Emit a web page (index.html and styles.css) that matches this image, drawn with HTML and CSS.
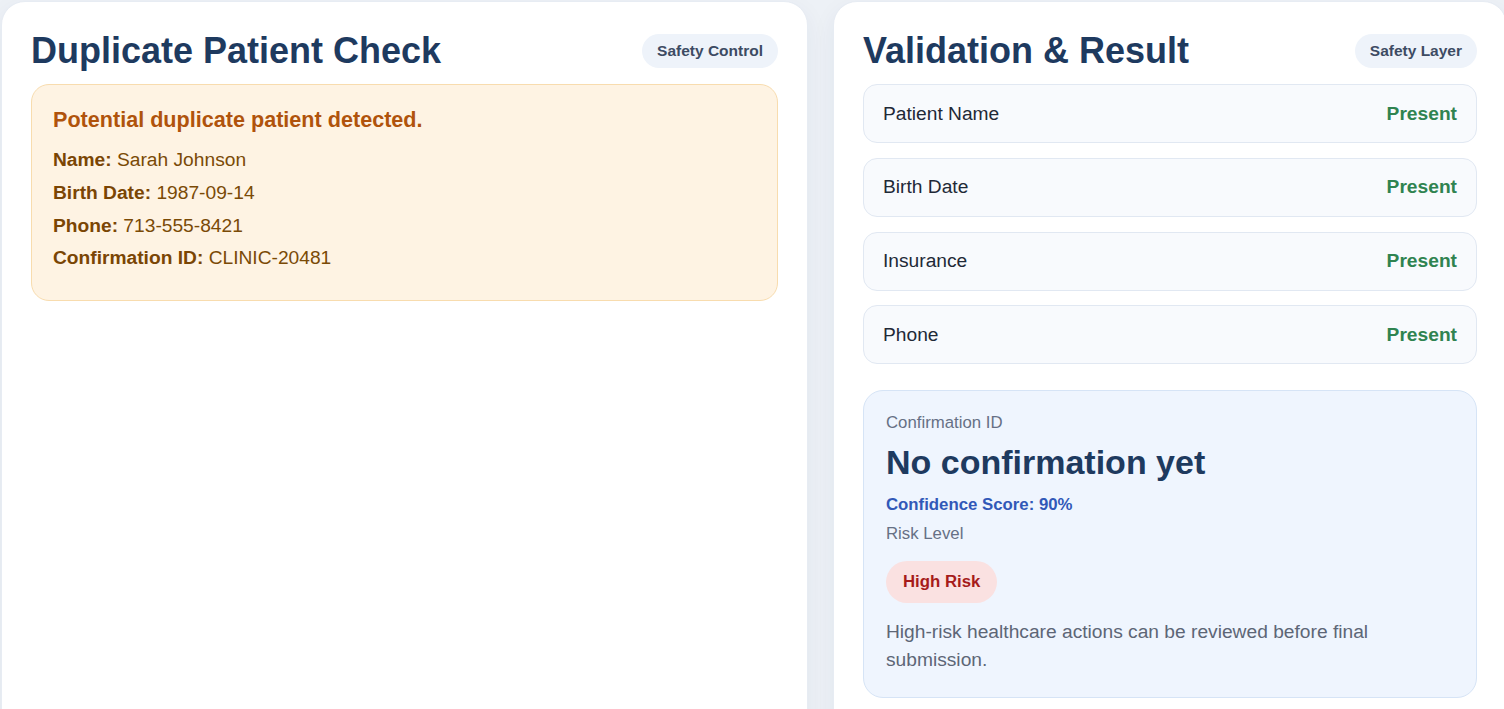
FILE: index.html
```html
<!DOCTYPE html>
<html lang="en">
<head>
<meta charset="utf-8">
<title>Duplicate Patient Check</title>
<link rel="stylesheet" href="styles.css">
</head>
<body>
<main class="layout">
  <section class="card">
    <header class="card-head">
      <h2 class="card-title">Duplicate Patient Check</h2>
      <span class="tag">Safety Control</span>
    </header>
    <div class="alert">
      <h3 class="alert-title">Potential duplicate patient detected.</h3>
      <p class="alert-line"><strong>Name:</strong> Sarah Johnson</p>
      <p class="alert-line"><strong>Birth Date:</strong> 1987-09-14</p>
      <p class="alert-line"><strong>Phone:</strong> 713-555-8421</p>
      <p class="alert-line"><strong>Confirmation ID:</strong> CLINIC-20481</p>
    </div>
  </section>

  <section class="card">
    <header class="card-head">
      <h2 class="card-title">Validation &amp; Result</h2>
      <span class="tag">Safety Layer</span>
    </header>
    <ul class="checks">
      <li class="check"><span class="check-label">Patient Name</span><span class="check-state">Present</span></li>
      <li class="check"><span class="check-label">Birth Date</span><span class="check-state">Present</span></li>
      <li class="check"><span class="check-label">Insurance</span><span class="check-state">Present</span></li>
      <li class="check"><span class="check-label">Phone</span><span class="check-state">Present</span></li>
    </ul>
    <div class="result">
      <div class="result-label">Confirmation ID</div>
      <div class="result-value">No confirmation yet</div>
      <div class="result-score">Confidence Score: 90%</div>
      <div class="result-label risk-label">Risk Level</div>
      <span class="risk-pill">High Risk</span>
      <p class="result-note">High-risk healthcare actions can be reviewed before final submission.</p>
    </div>
  </section>
</main>
</body>
</html>
```

FILE: styles.css
```css
* {
  box-sizing: border-box;
}

html, body {
  margin: 0;
  padding: 0;
}

body {
  background: #edf1f6;
  font-family: "Liberation Sans", Arial, sans-serif;
  color: #1f2937;
  overflow: hidden;
}

.layout {
  display: grid;
  grid-template-columns: 807px 674px;
  gap: 25px;
  padding: 1px 0 0 1px;
  width: 1510px;
}

.card {
  background: #ffffff;
  border: 1px solid #e7ecf3;
  border-radius: 24px;
  padding: 28px 29px 30px;
  box-shadow: 0 8px 24px rgba(30, 58, 95, 0.06);
  min-height: 760px;
}

.card-head {
  display: flex;
  align-items: center;
  justify-content: space-between;
  margin-bottom: 13px;
}

.card-title {
  margin: 0;
  font-size: 36px;
  font-weight: 700;
  line-height: 1.15;
  color: #1e3a5f;
}

.tag {
  background: #eef3fa;
  color: #3d4b63;
  font-size: 15.5px;
  font-weight: 700;
  padding: 8px 15px;
  border-radius: 999px;
  line-height: 1.15;
}

.alert {
  background: #fef3e3;
  border: 1px solid #f8dcae;
  border-radius: 18px;
  padding: 23px 21px 25px;
  color: #7a4a06;
}

.alert-title {
  margin: 0 0 11px;
  font-size: 21.6px;
  font-weight: 700;
  line-height: 1.15;
  color: #b0530c;
}

.alert-line {
  margin: 0;
  font-size: 19.2px;
  line-height: 1.7;
}

.alert-line strong {
  color: #7a4504;
}

.checks {
  list-style: none;
  margin: 0;
  padding: 0;
  display: flex;
  flex-direction: column;
  gap: 14.5px;
}

.check {
  display: flex;
  justify-content: space-between;
  align-items: center;
  background: #f8fafd;
  border: 1px solid #e1e8f2;
  border-radius: 14px;
  padding: 17.5px 19px;
  font-size: 19.2px;
  line-height: 1.15;
}

.check-label {
  color: #1f2937;
}

.check-state {
  color: #2f8350;
  font-weight: 700;
}

.result {
  margin-top: 26px;
  background: #eff5fe;
  border: 1px solid #d6e4f6;
  border-radius: 20px;
  padding: 22px 22px 22px;
  display: flex;
  flex-direction: column;
  align-items: flex-start;
}

.result-label {
  font-size: 16.8px;
  line-height: 1.15;
  color: #667085;
}

.result-value {
  margin-top: 10px;
  font-size: 34px;
  font-weight: 700;
  line-height: 1.15;
  color: #1e3a5f;
}

.result-score {
  margin-top: 13px;
  font-size: 16.8px;
  font-weight: 700;
  line-height: 1.15;
  color: #3158b8;
}

.risk-label {
  margin-top: 10px;
}

.risk-pill {
  margin-top: 18px;
  background: #fae1e1;
  color: #a61b1b;
  font-size: 16.8px;
  font-weight: 700;
  line-height: 1.15;
  padding: 11px 17px;
  border-radius: 999px;
}

.result-note {
  margin: 15px 0 0;
  font-size: 19.2px;
  line-height: 1.5;
  color: #5d6676;
}
```
